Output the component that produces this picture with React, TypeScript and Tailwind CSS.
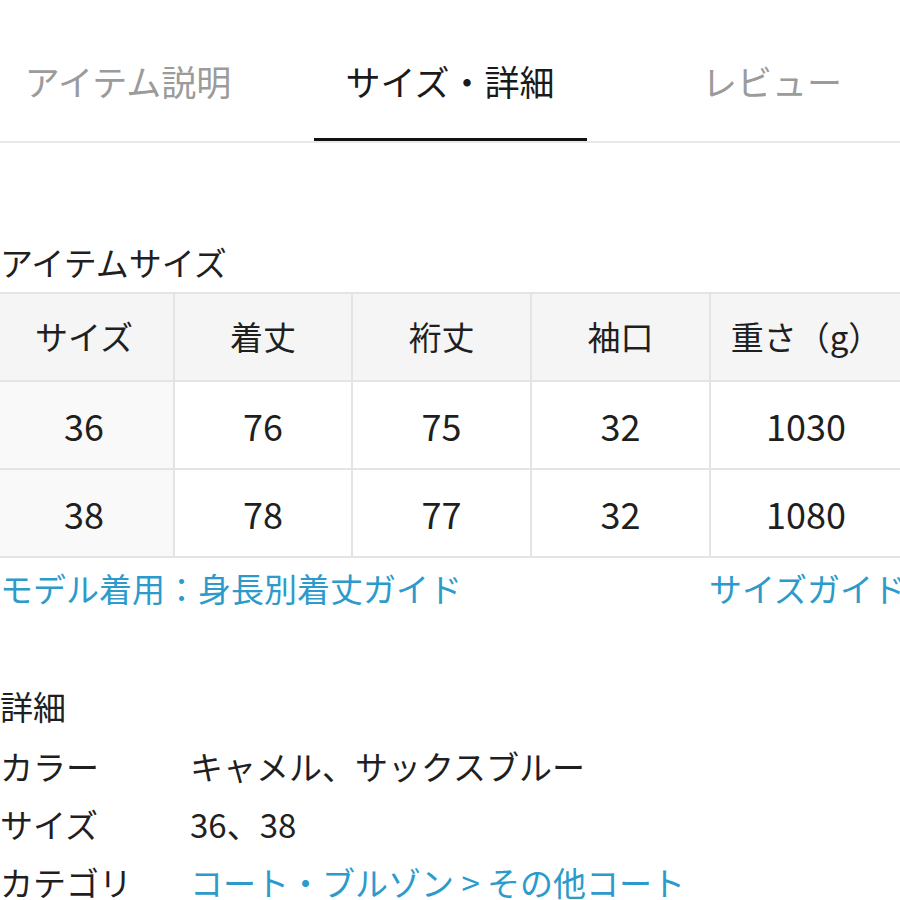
import React from "react";

const font = { fontFamily: '"Noto Sans CJK JP", "Noto Sans", sans-serif' };

export default function App() {
  const header = ["サイズ", "着丈", "裄丈", "袖口", "重さ（g）"];
  const rows = [
    ["36", "76", "75", "32", "1030"],
    ["38", "78", "77", "32", "1080"],
  ];
  const widths = ["w-[180px]", "w-[178px]", "w-[179px]", "w-[179px]", "w-[192px]"];
  return (
    <div className="w-[900px] h-[900px] overflow-hidden bg-white text-[#1f1f1f]" style={font}>
      {/* Tabs */}
      <div className="border-b-2 border-[#e8e8e8]">
        <div className="flex w-[966px] -ml-[33px]">
          {["アイテム説明", "サイズ・詳細", "レビュー"].map((t, i) => (
            <div key={t} className="flex-1 flex flex-col items-center h-[141px]">
              <div
                className={`pt-[57px] h-[138px] text-[35px] leading-[48px] ${
                  i === 1 ? "text-[#1a1a1a]" : "text-[#9b9b9b]"
                }`}
              >
                {t}
              </div>
              {i === 1 && <div className="w-[273px] h-[3px] bg-[#111]" />}
            </div>
          ))}
        </div>
      </div>

      {/* Item size heading */}
      <div className="mt-[99px] text-[33px] leading-[40px]">アイテムサイズ</div>

      {/* Table */}
      <div className="mt-[10px] -ml-[5px] w-[910px] border-t-2 border-[#e4e4e4]">
        <div className="flex bg-[#f5f5f5] border-b-2 border-[#e4e4e4]">
          {header.map((h, i) => (
            <div
              key={h}
              className={`${widths[i]} h-[86px] flex items-center justify-center text-[33px] border-r-2 border-[#e4e4e4] shrink-0`}
            >
              {h}
            </div>
          ))}
        </div>
        {rows.map((r, ri) => (
          <div key={ri} className="flex border-b-2 border-[#e4e4e4]">
            {r.map((c, i) => (
              <div
                key={i}
                className={`${widths[i]} h-[86px] flex items-center justify-center text-[36px] border-r-2 border-[#e4e4e4] shrink-0 ${
                  i === 0 ? "bg-[#f9f9f9]" : "bg-white"
                }`}
              >
                {c}
              </div>
            ))}
          </div>
        ))}
      </div>

      {/* Links */}
      <div className="mt-[10px] flex justify-between w-[906px] text-[33px] leading-[40px] text-[#2c9bcb]">
        <span className="whitespace-nowrap">モデル着用：身長別着丈ガイド</span>
        <span className="whitespace-nowrap">サイズガイド</span>
      </div>

      {/* Details */}
      <div className="mt-[78px] text-[33px] leading-[40px]">詳細</div>
      <div className="mt-[11px] grid grid-cols-[190px_1fr] text-[33px] leading-[58px]">
        <div>カラー</div>
        <div>キャメル、サックスブルー</div>
        <div>サイズ</div>
        <div>36、38</div>
        <div>カテゴリ</div>
        <div className="text-[#2c9bcb] whitespace-nowrap">コート・ブルゾン &gt; その他コート</div>
      </div>
    </div>
  );
}
